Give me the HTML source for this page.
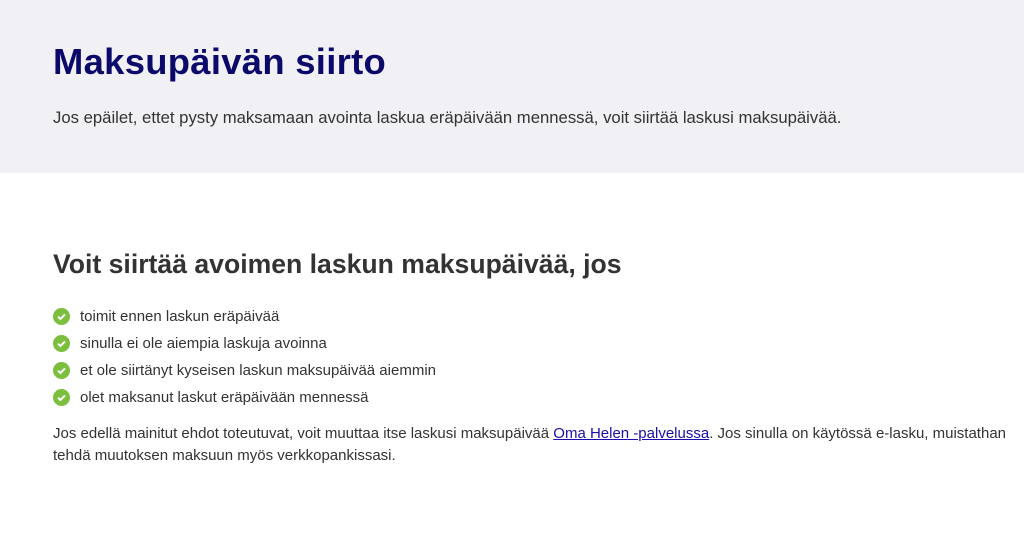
<!DOCTYPE html>
<html><head><meta charset="utf-8"><style>
*{margin:0;padding:0;box-sizing:border-box}
body{width:1024px;height:552px;background:#fff;font-family:"Liberation Sans",sans-serif;color:#333;overflow:hidden}
.hero{background:#f0f0f5;height:173px;position:relative}
h1{position:absolute;top:41px;left:53px;font-size:36.4px;font-weight:bold;color:#0b0a6b;letter-spacing:0.3px}
.sub{position:absolute;top:108px;left:53px;font-size:16.7px;color:#333}
h2{position:absolute;top:249px;left:53px;font-size:26.6px;font-weight:bold;color:#333}
ul{position:absolute;top:306px;left:53px;list-style:none}
li{height:27px;font-size:15px;line-height:22px;display:flex;align-items:flex-start}
li svg{margin-top:2px;margin-right:10px}
.p{position:absolute;top:423px;left:53px;width:965px;font-size:15px;line-height:22px}
a{color:#1a0dab}
</style></head><body>
<div class="hero"><h1>Maksupäivän siirto</h1><div class="sub">Jos epäilet, ettet pysty maksamaan avointa laskua eräpäivään mennessä, voit siirtää laskusi maksupäivää.</div></div>
<h2>Voit siirtää avoimen laskun maksupäivää, jos</h2>
<ul>
<li><svg width="17" height="17" viewBox="0 0 17 17"><circle cx="8.5" cy="8.5" r="8.5" fill="#7cbf3f"/><path d="M5 8.7l2.4 2.3 4.6-4.6" stroke="#fff" stroke-width="2" fill="none"/></svg>toimit ennen laskun eräpäivää</li>
<li><svg width="17" height="17" viewBox="0 0 17 17"><circle cx="8.5" cy="8.5" r="8.5" fill="#7cbf3f"/><path d="M5 8.7l2.4 2.3 4.6-4.6" stroke="#fff" stroke-width="2" fill="none"/></svg>sinulla ei ole aiempia laskuja avoinna</li>
<li><svg width="17" height="17" viewBox="0 0 17 17"><circle cx="8.5" cy="8.5" r="8.5" fill="#7cbf3f"/><path d="M5 8.7l2.4 2.3 4.6-4.6" stroke="#fff" stroke-width="2" fill="none"/></svg>et ole siirtänyt kyseisen laskun maksupäivää aiemmin</li>
<li><svg width="17" height="17" viewBox="0 0 17 17"><circle cx="8.5" cy="8.5" r="8.5" fill="#7cbf3f"/><path d="M5 8.7l2.4 2.3 4.6-4.6" stroke="#fff" stroke-width="2" fill="none"/></svg>olet maksanut laskut eräpäivään mennessä</li>
</ul>
<div class="p">Jos edellä mainitut ehdot toteutuvat, voit muuttaa itse laskusi maksupäivää <a href="#">Oma Helen -palvelussa</a>. Jos sinulla on käytössä e-lasku, muistathan<br>tehdä muutoksen maksuun myös verkkopankissasi.</div>
</body></html>
